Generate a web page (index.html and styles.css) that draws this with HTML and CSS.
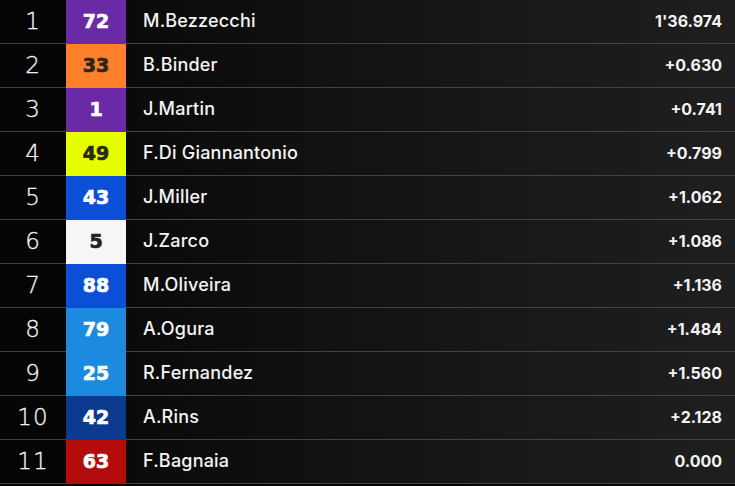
FILE: index.html
```html
<!DOCTYPE html>
<html>
<head>
<meta charset="utf-8">
<link rel="stylesheet" href="styles.css">
</head>
<body>
<div class="table">
  <div class="row"><div class="pos">1</div><div class="num purple">72</div><div class="info"><span class="name">M.Bezzecchi</span><span class="time">1'36.974</span></div></div>
  <div class="row"><div class="pos">2</div><div class="num orange">33</div><div class="info"><span class="name">B.Binder</span><span class="time">+0.630</span></div></div>
  <div class="row"><div class="pos">3</div><div class="num purple">1</div><div class="info"><span class="name">J.Martin</span><span class="time">+0.741</span></div></div>
  <div class="row"><div class="pos">4</div><div class="num lime">49</div><div class="info"><span class="name">F.Di Giannantonio</span><span class="time">+0.799</span></div></div>
  <div class="row"><div class="pos">5</div><div class="num blue">43</div><div class="info"><span class="name">J.Miller</span><span class="time">+1.062</span></div></div>
  <div class="row"><div class="pos">6</div><div class="num white">5</div><div class="info"><span class="name">J.Zarco</span><span class="time">+1.086</span></div></div>
  <div class="row"><div class="pos">7</div><div class="num blue">88</div><div class="info"><span class="name">M.Oliveira</span><span class="time">+1.136</span></div></div>
  <div class="row"><div class="pos">8</div><div class="num sky">79</div><div class="info"><span class="name">A.Ogura</span><span class="time">+1.484</span></div></div>
  <div class="row"><div class="pos">9</div><div class="num sky">25</div><div class="info"><span class="name">R.Fernandez</span><span class="time">+1.560</span></div></div>
  <div class="row"><div class="pos">10</div><div class="num navy">42</div><div class="info"><span class="name">A.Rins</span><span class="time">+2.128</span></div></div>
  <div class="row"><div class="pos">11</div><div class="num red">63</div><div class="info"><span class="name">F.Bagnaia</span><span class="time">0.000</span></div></div>
</div>
</body>
</html>
```
FILE: styles.css
```css
html, body {
  margin: 0;
  padding: 0;
  background: #050505;
}
.table {
  width: 735px;
  display: flex;
  flex-direction: column;
}
.row {
  display: flex;
  height: 44px;
  position: relative;
}
.row::after {
  content: "";
  position: absolute;
  left: 0;
  right: 0;
  bottom: 0;
  height: 1px;
  background: #424242;
}
.pos {
  width: 66px;
  flex: none;
  display: flex;
  align-items: center;
  justify-content: center;
  color: #f2f2f2;
  font-family: "DejaVu Sans", sans-serif;
  font-weight: 200;
  font-size: 23px;
  letter-spacing: 1px;
  -webkit-text-stroke: 0.3px #f2f2f2;
  background: #050505;
  padding-bottom: 3px;
  box-sizing: border-box;
}
.num {
  width: 60px;
  flex: none;
  display: flex;
  align-items: center;
  justify-content: center;
  font-family: "DejaVu Sans", sans-serif;
  font-weight: 700;
  font-size: 19px;
  color: #fff;
  -webkit-text-stroke: 0.7px currentColor;
  position: relative;
  z-index: 1;
  padding-bottom: 2px;
  box-sizing: border-box;
}
.purple { background: #6a2aa6; }
.orange { background: #ff7f2a; color: #2b2622; }
.lime { background: #e5ff00; color: #2a2a10; }
.blue { background: #0a4fd6; }
.white { background: #f6f6f6; color: #222; }
.sky { background: #1c8ade; }
.navy { background: #0b3a8e; }
.red { background: #b30c0c; }
.info {
  flex: 1;
  display: flex;
  align-items: center;
  justify-content: space-between;
  padding: 0 13px 3px 17px;
  background: linear-gradient(90deg, #0a0a0a 0%, #141414 45%, #1f1f1f 100%);
}
.name {
  font-family: "Inter", sans-serif;
  font-weight: 500;
  font-size: 18px;
  letter-spacing: 0.2px;
  color: #f4f4f4;
}
.time {
  font-family: "Inter", sans-serif;
  font-weight: 700;
  font-size: 16px;
  color: #f4f4f4;
}
```
